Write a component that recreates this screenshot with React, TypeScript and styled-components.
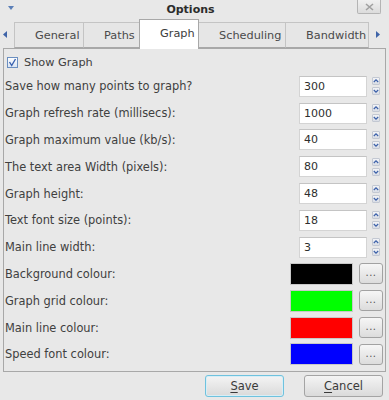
import styled, { createGlobalStyle, css } from 'styled-components';

const GlobalStyle = createGlobalStyle`
  html, body {
    margin: 0;
    padding: 0;
    background: #e8e8e8;
  }
  body {
    font-family: 'DejaVu Sans', 'Liberation Sans', sans-serif;
    font-size: 11px;
    color: #404040;
  }
`;

const tabs = [
  { label: 'General', width: 70 },
  { label: 'Paths', width: 57 },
  { label: 'Graph', width: 60, selected: true },
  { label: 'Scheduling', width: 88 },
  { label: 'Bandwidth', width: 84 },
];

const numberFields = [
  { label: 'Save how many points to graph?', value: '300' },
  { label: 'Graph refresh rate (millisecs):', value: '1000' },
  { label: 'Graph maximum value (kb/s):', value: '40' },
  { label: 'The text area Width (pixels):', value: '80' },
  { label: 'Graph height:', value: '48' },
  { label: 'Text font size (points):', value: '18' },
  { label: 'Main line width:', value: '3' },
];

const colourFields = [
  { label: 'Background colour:', colour: '#000000' },
  { label: 'Graph grid colour:', colour: '#00ff00' },
  { label: 'Main line colour:', colour: '#ff0000' },
  { label: 'Speed font colour:', colour: '#0000ff' },
];

export default function App() {
  return (
    <>
      <GlobalStyle />
      <Window>
        <TitleBar>
          <MenuArrow>
            <svg width="6" height="4" viewBox="0 0 6 4">
              <path d="M0 0 H6 L3 4 Z" fill="#5b7fb8" />
            </svg>
          </MenuArrow>
          <Title>Options</Title>
          <CloseButton>
            <svg width="9" height="8" viewBox="0 0 9 8">
              <path d="M1 1 L8 7 M8 1 L1 7" stroke="#a0a0a0" strokeWidth="1.6" />
            </svg>
          </CloseButton>
        </TitleBar>

        <TabRow>
          <ScrollArrow>
            <svg width="4" height="7" viewBox="0 0 4 7">
              <path d="M4 0 V7 L0 3.5 Z" fill="#3f64a8" />
            </svg>
          </ScrollArrow>
          <TabStrip>
            {tabs.map((tab) => (
              <Tab key={tab.label} $width={tab.width} $selected={!!tab.selected}>
                {tab.label}
              </Tab>
            ))}
          </TabStrip>
          <ScrollArrow $right>
            <svg width="4" height="7" viewBox="0 0 4 7">
              <path d="M0 0 V7 L4 3.5 Z" fill="#3f64a8" />
            </svg>
          </ScrollArrow>
        </TabRow>

        <Panel>
          <CheckRow>
            <CheckBox>
              <svg width="11" height="11" viewBox="0 0 11 11">
                <defs>
                  <linearGradient id="cb" x1="0" y1="0" x2="0" y2="1">
                    <stop offset="0" stopColor="#ffffff" />
                    <stop offset="1" stopColor="#d8e3f2" />
                  </linearGradient>
                </defs>
                <rect x="0.5" y="0.5" width="10" height="10" fill="url(#cb)" stroke="#6b8fc0" />
                <path d="M2.5 5 L4.7 8.5 L8.5 2" fill="none" stroke="#3a62b0" strokeWidth="1.4" />
              </svg>
            </CheckBox>
            <span>Show Graph</span>
          </CheckRow>

          {numberFields.map((field) => (
            <FieldRow key={field.label} $inset={5}>
              <FieldLabel>{field.label}</FieldLabel>
              <SpinBox>
                <SpinInput>{field.value}</SpinInput>
                <SpinButtons>
                  <SpinButton>
                    <svg width="6" height="6" viewBox="0 0 6 6">
                      <path d="M0.8 4 L3 1.8 L5.2 4" fill="none" stroke="#3a5fa8" strokeWidth="1.2" />
                    </svg>
                  </SpinButton>
                  <SpinButton>
                    <svg width="6" height="6" viewBox="0 0 6 6">
                      <path d="M0.8 2 L3 4.2 L5.2 2" fill="none" stroke="#3a5fa8" strokeWidth="1.2" />
                    </svg>
                  </SpinButton>
                </SpinButtons>
              </SpinBox>
            </FieldRow>
          ))}

          {colourFields.map((field) => (
            <FieldRow key={field.label} $inset={2}>
              <FieldLabel>{field.label}</FieldLabel>
              <ColourPicker>
                <Swatch $colour={field.colour} />
                <DotsButton>...</DotsButton>
              </ColourPicker>
            </FieldRow>
          ))}
        </Panel>

        <ButtonBar>
          <DialogButton $focused>
            <u>S</u>ave
          </DialogButton>
          <DialogButton>
            <u>C</u>ancel
          </DialogButton>
        </ButtonBar>
      </Window>
    </>
  );
}

const Window = styled.div`
  display: flex;
  flex-direction: column;
  width: 389px;
  height: 400px;
  background: #e8e8e8;
  overflow: hidden;
`;

const TitleBar = styled.div`
  display: grid;
  grid-template-columns: 24px 1fr 32px;
  align-items: center;
  height: 17px;
`;

const MenuArrow = styled.div`
  display: flex;
  padding-left: 8px;
  padding-bottom: 2px;
`;

const Title = styled.div`
  text-align: center;
  font-weight: bold;
  font-size: 11px;
  color: #2c2c2c;
  padding-top: 1px;
`;

const CloseButton = styled.div`
  display: flex;
  align-items: center;
  justify-content: center;
  align-self: start;
  width: 24px;
  height: 14px;
  box-sizing: border-box;
  border: 1px solid #b4b4b4;
  border-top: none;
  border-radius: 0 0 2px 2px;
  background: linear-gradient(#f0f0f0, #dcdcdc);
`;

const TabRow = styled.div`
  display: flex;
  align-items: flex-end;
  height: 31px;
  padding-left: 3px;
  position: relative;
  z-index: 1;
`;

const ScrollArrow = styled.div<{ $right?: boolean }>`
  display: flex;
  align-self: center;
  width: 11px;
  padding-left: ${({ $right }) => ($right ? '8px' : '0')};
  margin-top: 3px;
`;

const TabStrip = styled.div`
  display: flex;
  align-items: flex-end;
`;

const Tab = styled.div<{ $width: number; $selected: boolean }>`
  width: ${({ $width }) => $width}px;
  height: 26px;
  box-sizing: border-box;
  display: flex;
  align-items: center;
  padding-left: 20px;
  margin-right: -1px;
  border: 1px solid #c4c4c4;
  border-bottom: 1px solid #a8a8a8;
  background: #e6e6e6;
  color: #4a4a4a;
  font-size: 11.3px;
  white-space: nowrap;

  ${({ $selected }) =>
    $selected &&
    css`
      position: relative;
      z-index: 2;
      height: 30px;
      margin-bottom: -1px;
      padding-bottom: 2px;
      background: #ffffff;
      border-color: #a8a8a8;
      border-bottom: none;
      color: #3c3c3c;
    `}
`;

const Panel = styled.div`
  display: flex;
  flex-direction: column;
  height: 324px;
  margin: 0 3px;
  padding-top: 3px;
  box-sizing: border-box;
  border: 1px solid #a8a8a8;
`;

const CheckRow = styled.div`
  display: flex;
  align-items: center;
  gap: 6px;
  height: 21px;
  padding-left: 3px;
  font-size: 11.3px;
`;

const CheckBox = styled.div`
  display: flex;
`;

const FieldRow = styled.div<{ $inset: number }>`
  display: flex;
  align-items: center;
  justify-content: space-between;
  height: 26.8px;
  padding-left: 1px;
  padding-right: ${({ $inset }) => $inset}px;
`;

const FieldLabel = styled.span`
  white-space: nowrap;
  font-size: 11.4px;
`;

const SpinBox = styled.div`
  display: flex;
  align-items: center;
  gap: 5px;
`;

const SpinInput = styled.div`
  display: flex;
  align-items: center;
  width: 68px;
  height: 21px;
  box-sizing: border-box;
  padding-left: 4px;
  background: #ffffff;
  border: 1px solid #d4d4d4;
  border-top-color: #c4c4c4;
  color: #2e2e2e;
`;

const SpinButtons = styled.div`
  display: flex;
  flex-direction: column;
  gap: 2px;
`;

const SpinButton = styled.div`
  display: flex;
  align-items: center;
  justify-content: center;
  width: 8px;
  height: 8px;
  box-sizing: border-box;
  background: linear-gradient(#f2f3f6, #d9dde5);
  border: 1px solid #c3c8d2;
  border-radius: 1px;
`;

const ColourPicker = styled.div`
  display: flex;
  align-items: center;
  gap: 6px;
`;

const Swatch = styled.div<{ $colour: string }>`
  width: 63px;
  height: 22px;
  box-sizing: border-box;
  background: ${({ $colour }) => $colour};
  border: 1px solid #c8c8c8;
`;

const DotsButton = styled.div`
  display: flex;
  align-items: center;
  justify-content: center;
  width: 24px;
  height: 21px;
  box-sizing: border-box;
  border: 1px solid #a2a2a2;
  border-radius: 3px;
  background: linear-gradient(#f6f6f6, #dcdcdc);
  color: #555555;
  font-size: 10px;
  letter-spacing: 0.5px;
  padding-bottom: 2px;
`;

const ButtonBar = styled.div`
  display: flex;
  justify-content: flex-end;
  gap: 20px;
  padding: 3px 6px 0 0;
`;

const DialogButton = styled.div<{ $focused?: boolean }>`
  display: flex;
  align-items: center;
  justify-content: center;
  width: 79px;
  height: 22px;
  box-sizing: border-box;
  border: 1px solid ${({ $focused }) => ($focused ? '#6fc2de' : '#a4a4a4')};
  border-radius: 3px;
  background: linear-gradient(#f4f4f4, #dadada);
  color: #3a3a3a;
  font-size: 11.5px;
  box-shadow: ${({ $focused }) => ($focused ? 'inset 0 0 0 1px #d8eef6' : 'none')};

  u {
    text-decoration-thickness: 1px;
    text-underline-offset: 2px;
  }
`;
